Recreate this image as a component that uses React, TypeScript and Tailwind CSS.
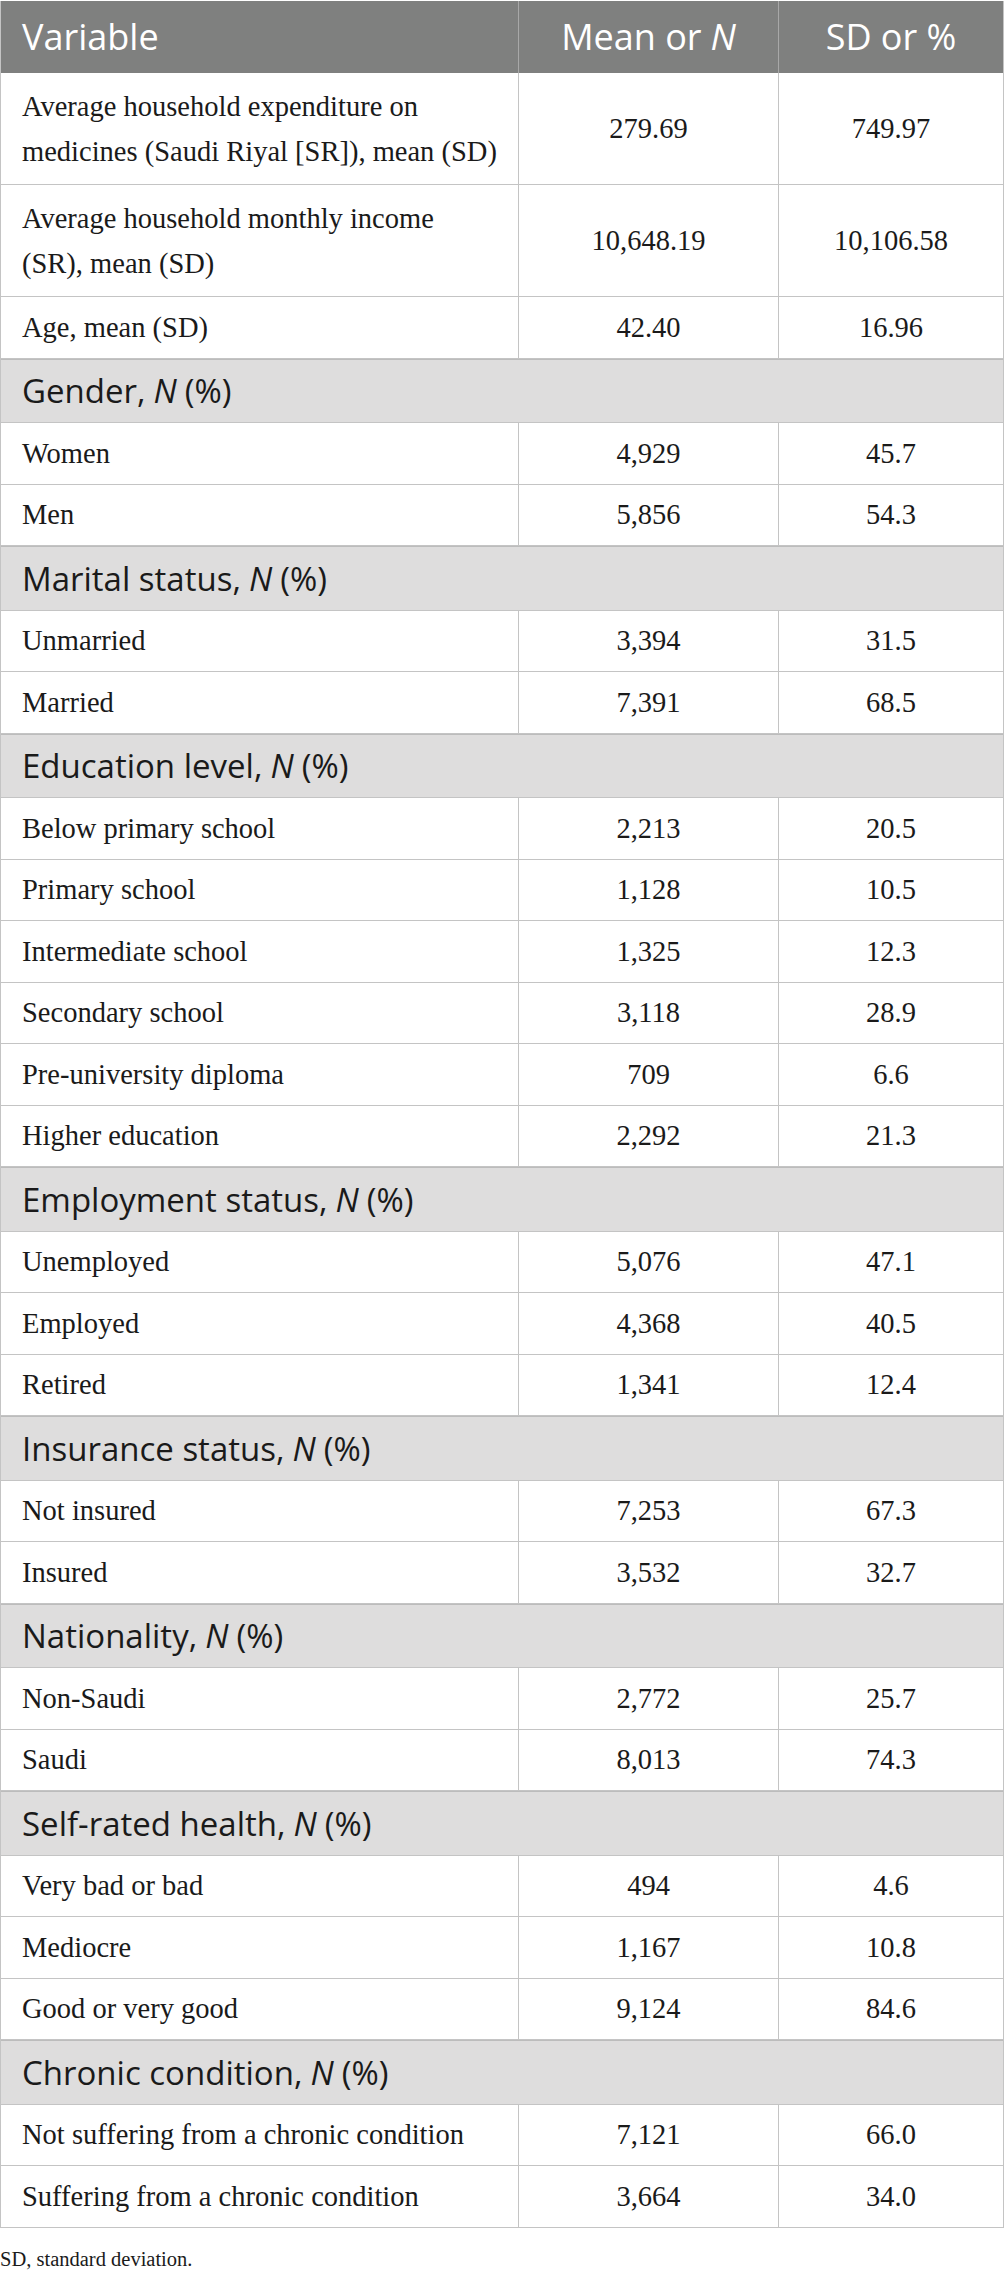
const serif = "font-['Liberation_Serif','Times_New_Roman',serif]";

type Row =
  | { kind: "section"; label: string }
  | { kind: "data"; label: string; n: string; pct: string; tall?: boolean };

const rows: Row[] = [
  {
    kind: "data",
    label: "Average household expenditure on medicines (Saudi Riyal [SR]), mean (SD)",
    n: "279.69",
    pct: "749.97",
    tall: true,
  },
  {
    kind: "data",
    label: "Average household monthly income (SR), mean (SD)",
    n: "10,648.19",
    pct: "10,106.58",
    tall: true,
  },
  { kind: "data", label: "Age, mean (SD)", n: "42.40", pct: "16.96" },
  { kind: "section", label: "Gender" },
  { kind: "data", label: "Women", n: "4,929", pct: "45.7" },
  { kind: "data", label: "Men", n: "5,856", pct: "54.3" },
  { kind: "section", label: "Marital status" },
  { kind: "data", label: "Unmarried", n: "3,394", pct: "31.5" },
  { kind: "data", label: "Married", n: "7,391", pct: "68.5" },
  { kind: "section", label: "Education level" },
  { kind: "data", label: "Below primary school", n: "2,213", pct: "20.5" },
  { kind: "data", label: "Primary school", n: "1,128", pct: "10.5" },
  { kind: "data", label: "Intermediate school", n: "1,325", pct: "12.3" },
  { kind: "data", label: "Secondary school", n: "3,118", pct: "28.9" },
  { kind: "data", label: "Pre-university diploma", n: "709", pct: "6.6" },
  { kind: "data", label: "Higher education", n: "2,292", pct: "21.3" },
  { kind: "section", label: "Employment status" },
  { kind: "data", label: "Unemployed", n: "5,076", pct: "47.1" },
  { kind: "data", label: "Employed", n: "4,368", pct: "40.5" },
  { kind: "data", label: "Retired", n: "1,341", pct: "12.4" },
  { kind: "section", label: "Insurance status" },
  { kind: "data", label: "Not insured", n: "7,253", pct: "67.3" },
  { kind: "data", label: "Insured", n: "3,532", pct: "32.7" },
  { kind: "section", label: "Nationality" },
  { kind: "data", label: "Non-Saudi", n: "2,772", pct: "25.7" },
  { kind: "data", label: "Saudi", n: "8,013", pct: "74.3" },
  { kind: "section", label: "Self-rated health" },
  { kind: "data", label: "Very bad or bad", n: "494", pct: "4.6" },
  { kind: "data", label: "Mediocre", n: "1,167", pct: "10.8" },
  { kind: "data", label: "Good or very good", n: "9,124", pct: "84.6" },
  { kind: "section", label: "Chronic condition" },
  { kind: "data", label: "Not suffering from a chronic condition", n: "7,121", pct: "66.0" },
  { kind: "data", label: "Suffering from a chronic condition", n: "3,664", pct: "34.0" },
];

function SectionRow({ label }: { label: string }) {
  return (
    <div className="flex h-[64.5px] items-center border-t border-b border-t-[#bcbcbc] border-b-[#c4c4c4] bg-[#dedddd] px-[21px] font-['Open_Sans',sans-serif] text-[33px] text-[#1a1a1a]">
      {label}, <i className="mx-[8px]">N</i> (%)
    </div>
  );
}

function DataRow({ label, n, pct, tall }: { label: string; n: string; pct: string; tall?: boolean }) {
  return (
    <div
      className={`grid grid-cols-[518px_260px_1fr] border-b border-[#c4c4c4] ${serif} text-[28.5px] leading-[45px] text-[#1a1a1a] ${
        tall ? "h-[112px]" : "h-[61.5px]"
      }`}
    >
      <div className="flex items-center border-r border-[#c4c4c4] px-[21px]">{label}</div>
      <div className="flex items-center justify-center border-r border-[#c4c4c4]">{n}</div>
      <div className="flex items-center justify-center">{pct}</div>
    </div>
  );
}

export default function App() {
  return (
    <div className="w-[1005px] bg-white pt-px">
      <div className="w-[1004px] border-x border-[#c4c4c4]">
        <div className="grid h-[72px] grid-cols-[518px_260px_1fr] bg-[#7f807f] font-['Open_Sans',sans-serif] text-[36px] text-white">
          <div className="flex items-center border-r border-[#a8a8a8] px-[21px]">Variable</div>
          <div className="flex items-center justify-center border-r border-[#a8a8a8]">
            Mean or <i className="ml-[9px]">N</i>
          </div>
          <div className="flex items-center justify-center">SD or %</div>
        </div>
        {rows.map((r, i) =>
          r.kind === "section" ? (
            <SectionRow key={i} label={r.label} />
          ) : (
            <DataRow key={i} label={r.label} n={r.n} pct={r.pct} tall={r.tall} />
          )
        )}
      </div>
      <p className={`${serif} mt-[17px] text-[20.5px] leading-[28px] text-[#1a1a1a]`}>SD, standard deviation.</p>
    </div>
  );
}
